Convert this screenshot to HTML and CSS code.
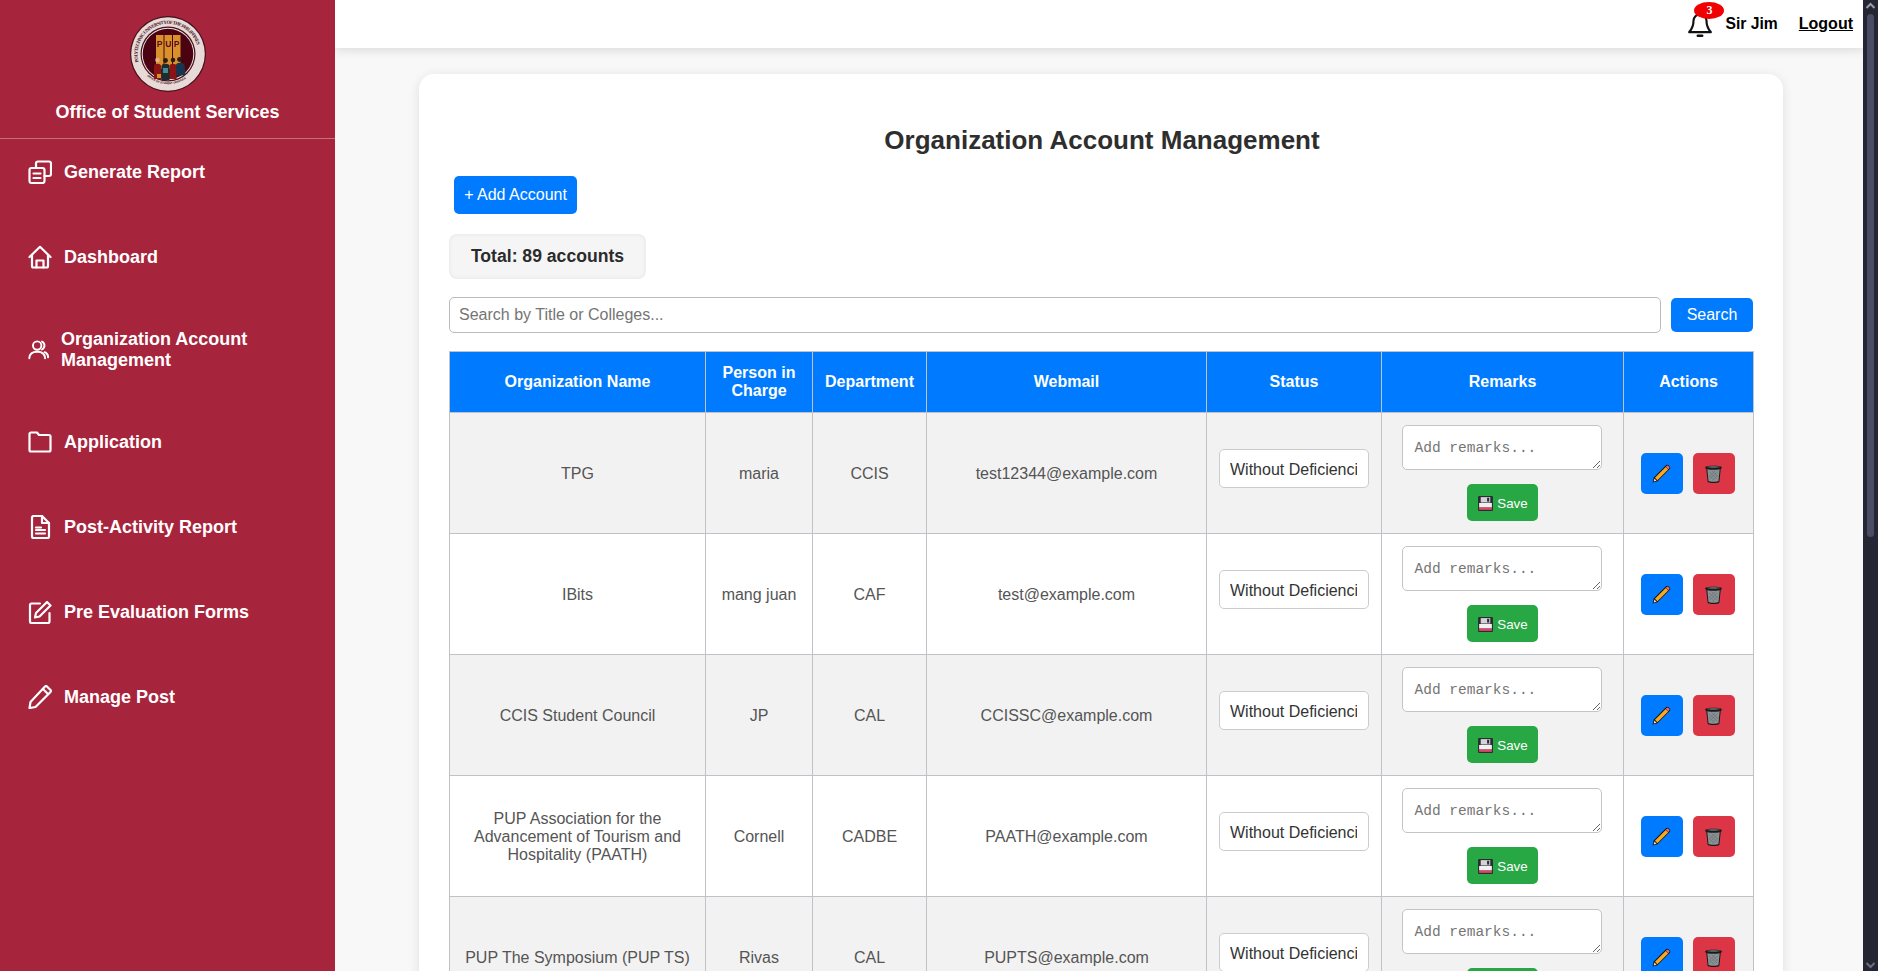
FILE: index.html
```html
<!DOCTYPE html>
<html lang="en">
<head>
<meta charset="utf-8">
<title>Organization Account Management</title>
<link rel="stylesheet" href="styles.css">
</head>
<body>
<svg class="defs" width="0" height="0" aria-hidden="true">
  <symbol id="e-pencil" viewBox="0 0 16 16">
    <path d="M1.200 14.800l.9-3.700L11.600 1.600a1.100 1.100 0 0 1 1.500 0l1.300 1.300a1.100 1.100 0 0 1 0 1.500L4.900 13.900z" fill="#111"/>
    <path d="M3 11.200l8.200-8.200 1.900 1.900-8.200 8.200z" fill="#f9a825"/>
    <path d="M11.300 2.800l.9-.8a.5.5 0 0 1 .7 0l1.100 1.100a.5.5 0 0 1 0 .7l-.8.9z" fill="#f06a80"/>
    <path d="M2.600 11.800l1.700 1.700-2.300.6z" fill="#f3d9b8"/>
  </symbol>
  <symbol id="e-trash" viewBox="0 0 16 16">
    <path d="M1.600 3.200C1.600 1.600 14.400 1.600 14.400 3.200c0 .7-.5 1.100-.9 1.300L12.500 14c-.1 1.600-8.900 1.600-9 0L2.500 4.500c-.4-.2-.9-.6-.9-1.300z" fill="#1a1a1a"/>
    <path d="M3.300 4.700c2.500.6 6.900.6 9.400 0L11.800 13.700c-1 .8-6.600 .8-7.600 0z" fill="#8a9296"/>
    <path d="M2.600 3.100c2.500-.8 8.300-.8 10.800 0-2.500.8-8.300.8-10.800 0z" fill="#6c7377"/>
    <path d="M4.500 6.500l6.500 6M6.500 5.800l5 4.500M4.800 9.500l3.800 3.800M11.300 6.500l-6.500 6M9.500 5.800l-5 4.500M11 9.500l-3.800 3.800" stroke="#6a7175" stroke-width=".5" fill="none"/>
  </symbol>
  <symbol id="e-disk" viewBox="0 0 16 16">
    <rect x="1" y="1" width="14" height="14" rx="1" fill="#2b2b33"/>
    <rect x="2" y="11.500" width="12" height="2.500" fill="#d9476a"/>
    <rect x="2" y="7.500" width="12" height="4" fill="#f1f1f1"/>
    <rect x="3.500" y="2" width="9" height="5" fill="#d4d4d8"/>
    <rect x="9.500" y="2.600" width="2" height="3.600" fill="#2b2b33"/>
  </symbol>
</svg>
<div class="app">
  <aside class="sidebar">
    <div class="brand">
      <svg class="logo" viewBox="0 0 76 76" role="img" aria-label="Office of Student Services seal">
        <defs>
          <path id="ring-top" d="M8.500 46A30.500 30.500 0 1 1 67.500 46"/>
          <path id="ring-bottom" d="M17 60A31 31 0 0 0 59 60"/>
        </defs>
        <circle cx="38" cy="38" r="38" fill="#43101d"/>
        <circle cx="38" cy="38" r="36.800" fill="#e8dad7"/>
        <text class="logo-ring"><textPath href="#ring-top" textLength="94">POLYTECHNIC UNIVERSITY OF THE PHILIPPINES</textPath></text>
        <text class="logo-ring-small"><textPath href="#ring-bottom" textLength="42">OFFICE OF STUDENT SERVICES</textPath></text>
        <circle cx="38" cy="38" r="27.500" fill="#43101d"/>
        <circle cx="38" cy="38" r="26.300" fill="#efe4e0"/>
        <circle cx="38" cy="38" r="25.300" fill="#4b0312"/>
        <rect x="26" y="19" width="7.500" height="34" fill="#d9922b"/>
        <rect x="34.500" y="19" width="7.500" height="34" fill="#d9922b"/>
        <rect x="43" y="19" width="7.500" height="34" fill="#d9922b"/>
        <text class="logo-pup" x="29.700" y="31">P</text>
        <text class="logo-pup" x="38.200" y="31">U</text>
        <text class="logo-pup" x="46.700" y="31">P</text>
        <circle cx="27.500" cy="44" r="2.300" fill="#e2b08c"/>
        <path d="M24 63V50c0-3 7-3 7 0l1 13z" fill="#8a1414"/>
        <circle cx="35.500" cy="44.500" r="2.400" fill="#2a1a1a"/>
        <path d="M31.500 64V50c0-3 8-3 8 0v14z" fill="#1d2b33"/>
        <rect x="33" y="52" width="5" height="5" fill="#3d8f8f"/>
        <circle cx="43" cy="44" r="2.300" fill="#2a1a1a"/>
        <path d="M39.500 63V50c0-3 7-3 7 0v13z" fill="#8a1414"/>
        <circle cx="49.500" cy="43.500" r="2.400" fill="#2a1a1a"/>
        <path d="M46 60V49c0-3 8-3 8.500 0l1 10z" fill="#17364d"/>
        <rect x="27" y="58" width="4" height="4" fill="#d9922b"/>
      </svg>
      <div class="brand-title">Office of Student Services</div>
    </div>
    <nav class="nav">
      <a class="nav-item">
        <svg class="nav-icon" viewBox="0 0 24 24"><rect x="1.500" y="8" width="15" height="15" rx="2"/><path d="M8 8V3.500a2 2 0 0 1 2-2h11a2 2 0 0 1 2 2V14a2 2 0 0 1-2 2h-4.500"/><path d="M5.500 13.500h7M5.500 18h7"/></svg>
        <span>Generate Report</span>
      </a>
      <a class="nav-item">
        <svg class="nav-icon" viewBox="0 0 24 24"><path d="M1.500 12L12 1.800 22.500 12"/><path d="M4 10v11a1.500 1.500 0 0 0 1.500 1.500h13A1.500 1.500 0 0 0 20 21V10"/><path d="M8.500 22.500V15.500h7v7"/></svg>
        <span>Dashboard</span>
      </a>
      <a class="nav-item">
        <svg class="nav-icon nav-icon-small" viewBox="0 0 24 24"><circle cx="10.500" cy="7.500" r="4.800"/><path d="M1.500 22c0-5 3.500-7.500 9-7.500s9 2.500 9 7.500"/><path d="M16 3a5 5 0 0 1 0 9"/><path d="M19 15c2.500 1 4 3 4 6"/></svg>
        <span>Organization Account Management</span>
      </a>
      <a class="nav-item">
        <svg class="nav-icon" viewBox="0 0 24 24"><path d="M1.500 4a1.500 1.500 0 0 1 1.500-1.500h6l2 2.500h10a1.500 1.500 0 0 1 1.500 1.500V20a1.500 1.500 0 0 1-1.500 1.500H3A1.500 1.500 0 0 1 1.500 20z"/></svg>
        <span>Application</span>
      </a>
      <a class="nav-item">
        <svg class="nav-icon" viewBox="0 0 24 24"><path d="M4 2.500a1.500 1.500 0 0 1 1.500-1.500H14l7 7v13.500a1.500 1.500 0 0 1-1.500 1.500h-14A1.500 1.500 0 0 1 4 21.500z"/><path d="M14 1v7h7"/><path d="M8 12.500h5M8 15h9M8 18.500h9"/></svg>
        <span>Post-Activity Report</span>
      </a>
      <a class="nav-item">
        <svg class="nav-icon" viewBox="0 0 24 24"><path d="M12 3.500H3.500a1.500 1.500 0 0 0-1.500 1.500v16.500A1.500 1.500 0 0 0 3.500 23H20a1.500 1.500 0 0 0 1.500-1.500V13"/><path d="M19 2l3.500 3.500L11.500 16.500 7 17.500l1-4.500z"/></svg>
        <span>Pre Evaluation Forms</span>
      </a>
      <a class="nav-item">
        <svg class="nav-icon" viewBox="0 0 24 24"><path d="M19 1.500l3.500 3.500a1.500 1.500 0 0 1 0 2L7.500 22 1.500 23l1-6L17 1.500a1.500 1.500 0 0 1 2 0z"/><path d="M15 4l5 5"/></svg>
        <span>Manage Post</span>
      </a>
    </nav>
  </aside>
  <div class="workspace">
    <header class="topbar">
      <div class="bell">
        <svg class="bell-icon" viewBox="0 0 24 24"><path d="M18 9a6 6 0 0 0-12 0c0 6-2 8-4 10.500h20C20 17 18 15 18 9z"/><path d="M10 22.800h4" stroke-width="2.400"/></svg>
        <span class="bell-badge">3</span>
      </div>
      <span class="user-name">Sir Jim</span>
      <a class="logout">Logout</a>
    </header>
    <main class="main">
      <section class="card">
        <h1 class="title">Organization Account Management</h1>
        <button class="btn btn-add">+ Add Account</button>
        <div class="total">Total: 89 accounts</div>
        <div class="search-row">
          <input class="search-input" type="text" placeholder="Search by Title or Colleges...">
          <button class="btn btn-search">Search</button>
        </div>
        <table class="accounts">
          <colgroup>
            <col class="c-org"><col class="c-person"><col class="c-dept"><col class="c-mail"><col class="c-status"><col class="c-remarks"><col class="c-actions">
          </colgroup>
          <thead>
            <tr><th>Organization Name</th><th>Person in Charge</th><th>Department</th><th>Webmail</th><th>Status</th><th>Remarks</th><th>Actions</th></tr>
          </thead>
          <tbody>
            <tr>
              <td>TPG</td><td>maria</td><td>CCIS</td><td>test12344@example.com</td>
              <td><select class="status"><option>Without Deficiencies</option></select></td>
              <td><div class="remarks"><textarea class="remark-box" placeholder="Add remarks..."></textarea><button class="btn-save"><svg class="emoji"><use href="#e-disk"/></svg>Save</button></div></td>
              <td><div class="actions"><button class="act act-edit"><svg class="emoji-lg"><use href="#e-pencil"/></svg></button><button class="act act-del"><svg class="emoji-lg"><use href="#e-trash"/></svg></button></div></td>
            </tr>
            <tr>
              <td>IBits</td><td>mang juan</td><td>CAF</td><td>test@example.com</td>
              <td><select class="status"><option>Without Deficiencies</option></select></td>
              <td><div class="remarks"><textarea class="remark-box" placeholder="Add remarks..."></textarea><button class="btn-save"><svg class="emoji"><use href="#e-disk"/></svg>Save</button></div></td>
              <td><div class="actions"><button class="act act-edit"><svg class="emoji-lg"><use href="#e-pencil"/></svg></button><button class="act act-del"><svg class="emoji-lg"><use href="#e-trash"/></svg></button></div></td>
            </tr>
            <tr>
              <td>CCIS Student Council</td><td>JP</td><td>CAL</td><td>CCISSC@example.com</td>
              <td><select class="status"><option>Without Deficiencies</option></select></td>
              <td><div class="remarks"><textarea class="remark-box" placeholder="Add remarks..."></textarea><button class="btn-save"><svg class="emoji"><use href="#e-disk"/></svg>Save</button></div></td>
              <td><div class="actions"><button class="act act-edit"><svg class="emoji-lg"><use href="#e-pencil"/></svg></button><button class="act act-del"><svg class="emoji-lg"><use href="#e-trash"/></svg></button></div></td>
            </tr>
            <tr>
              <td>PUP Association for the Advancement of Tourism and Hospitality (PAATH)</td><td>Cornell</td><td>CADBE</td><td>PAATH@example.com</td>
              <td><select class="status"><option>Without Deficiencies</option></select></td>
              <td><div class="remarks"><textarea class="remark-box" placeholder="Add remarks..."></textarea><button class="btn-save"><svg class="emoji"><use href="#e-disk"/></svg>Save</button></div></td>
              <td><div class="actions"><button class="act act-edit"><svg class="emoji-lg"><use href="#e-pencil"/></svg></button><button class="act act-del"><svg class="emoji-lg"><use href="#e-trash"/></svg></button></div></td>
            </tr>
            <tr>
              <td>PUP The Symposium (PUP TS)</td><td>Rivas</td><td>CAL</td><td>PUPTS@example.com</td>
              <td><select class="status"><option>Without Deficiencies</option></select></td>
              <td><div class="remarks"><textarea class="remark-box" placeholder="Add remarks..."></textarea><button class="btn-save"><svg class="emoji"><use href="#e-disk"/></svg>Save</button></div></td>
              <td><div class="actions"><button class="act act-edit"><svg class="emoji-lg"><use href="#e-pencil"/></svg></button><button class="act act-del"><svg class="emoji-lg"><use href="#e-trash"/></svg></button></div></td>
            </tr>
          </tbody>
        </table>
      </section>
    </main>
  </div>
  <div class="scrollbar">
    <svg class="scroll-arrow" viewBox="0 0 15 12"><path d="M3.500 8L7.500 4l4 4"/></svg>
    <div class="scroll-thumb"></div>
    <svg class="scroll-arrow scroll-arrow-down" viewBox="0 0 15 12"><path d="M3.500 4l4 4 4-4"/></svg>
  </div>
</div>
</body>
</html>
```
FILE: styles.css
```css
* { box-sizing: border-box; }
html, body { height: 100%; }
body {
  margin: 0;
  font-family: "Liberation Sans", Arial, sans-serif;
  background: #f8f8f8;
  color: #333;
  overflow: hidden;
}
.defs { position: absolute; }
.app { display: flex; height: 100vh; overflow: hidden; }

/* Sidebar */
.sidebar {
  flex: 0 0 335px;
  background: #a7243d;
  color: #fff;
  z-index: 3;
}
.brand {
  height: 139px;
  padding-top: 16px;
  border-bottom: 1px solid rgba(255, 255, 255, 0.35);
  display: flex;
  flex-direction: column;
  align-items: center;
}
.logo { width: 76px; height: 76px; display: block; }
.logo-ring { font: bold 4.800px "Liberation Serif", serif; fill: #43101d; }
.logo-ring-small { font: bold 2.800px "Liberation Sans", sans-serif; fill: #43101d; }
.logo-pup { font: bold 8.500px "Liberation Sans", sans-serif; fill: #5a0a18; text-anchor: middle; }
.brand-title { margin-top: 9px; font-size: 18px; line-height: 22px; font-weight: 700; }
.nav { display: flex; flex-direction: column; gap: 19px; }
.nav-item {
  display: flex;
  align-items: center;
  gap: 12px;
  min-height: 66px;
  padding: 19.500px 30px 19.500px 28px;
  font-size: 18px;
  line-height: 21px;
  font-weight: 700;
  color: #fff;
}
.nav-icon {
  flex: 0 0 24px;
  width: 24px;
  height: 24px;
  fill: none;
  stroke: #fff;
  stroke-width: 2.200;
  stroke-linecap: round;
  stroke-linejoin: round;
}
.nav-icon-small { flex-basis: 21px; width: 21px; height: 21px; }

/* Workspace */
.workspace { flex: 1; min-width: 0; display: flex; flex-direction: column; }
.topbar {
  flex: 0 0 48px;
  background: #fff;
  display: flex;
  align-items: center;
  justify-content: flex-end;
  padding-right: 10px;
  box-shadow: 0 2px 10px rgba(0, 0, 0, 0.13);
  z-index: 2;
  color: #000;
}
.bell { position: relative; width: 26px; height: 26px; margin-right: 12px; }
.bell-icon {
  width: 26px;
  height: 26px;
  display: block;
  fill: none;
  stroke: #111;
  stroke-width: 2;
  stroke-linejoin: round;
  stroke-linecap: round;
}
.bell-badge {
  position: absolute;
  left: 7px;
  top: -9px;
  width: 30px;
  height: 17px;
  border-radius: 50%;
  background: #f00000;
  color: #fff;
  font: bold 12px/17px "Liberation Serif", serif;
  text-align: center;
}
.user-name { font-size: 15.700px; font-weight: 700; margin-right: 21px; }
.logout { font-size: 16px; font-weight: 700; text-decoration: underline; }

.main { flex: 1; min-height: 0; overflow: hidden; padding: 26px 80px 0 84px; }
.card {
  background: #fff;
  border-radius: 15px;
  padding: 30px;
  box-shadow: 0 2px 12px rgba(0, 0, 0, 0.1);
}
.title {
  margin: 21px 0 21px;
  padding-left: 2px;
  font-size: 26px;
  line-height: 30px;
  font-weight: 700;
  text-align: center;
  color: #2e2e2e;
}
.btn {
  display: block;
  border: 0;
  border-radius: 5px;
  background: #007bff;
  color: #fff;
  font: 16px "Liberation Sans", sans-serif;
}
.btn-add { width: 123px; height: 38px; margin-left: 5px; padding: 0; }
.total {
  width: 197px;
  height: 45px;
  margin-top: 20px;
  border-radius: 8px;
  background: #f5f5f5;
  box-shadow: inset 0 0 4px rgba(0, 0, 0, 0.08);
  font-size: 17.600px;
  line-height: 45px;
  font-weight: 700;
  text-align: center;
  color: #2b2b2b;
}
.search-row { display: flex; align-items: center; gap: 10px; margin-top: 18px; }
.search-input {
  flex: 1;
  height: 36px;
  padding: 0 9px;
  border: 1px solid #bbb;
  border-radius: 5px;
  font: 16px "Liberation Sans", sans-serif;
  color: #333;
}
.search-input::placeholder { color: #757575; }
.btn-search { width: 82px; height: 34px; padding: 0; }

/* Table */
.accounts {
  width: 1304px;
  margin-top: 18px;
  border-collapse: collapse;
  table-layout: fixed;
}
.c-org { width: 256px; }
.c-person { width: 107px; }
.c-dept { width: 114px; }
.c-mail { width: 280px; }
.c-status { width: 175px; }
.c-remarks { width: 242px; }
.c-actions { width: 130px; }
.accounts th, .accounts td {
  border: 1px solid #bfc3c7;
  padding: 12px;
  text-align: center;
  vertical-align: middle;
  font-size: 16px;
}
.accounts th {
  height: 61px;
  padding: 10px 8px;
  background: #007bff;
  color: #fff;
  font-weight: 700;
  line-height: 18px;
}
.accounts td { color: #555; line-height: 18px; }
.accounts td:nth-child(-n+4) { padding-top: 13px; padding-bottom: 11px; }
.accounts tbody tr:nth-child(odd) td { background: #f2f2f2; }
.status {
  display: block;
  width: 150px;
  height: 39px;
  margin: 0 auto 9px;
  padding: 2px 11px 0 10px;
  appearance: none;
  -webkit-appearance: none;
  background: #fff;
  border: 1px solid #ccc;
  border-radius: 5px;
  font: 16px "Liberation Sans", sans-serif;
  color: #333;
}
.remarks { display: flex; flex-direction: column; align-items: center; gap: 14px; }
.remark-box {
  display: block;
  width: 200px;
  height: 45px;
  margin-right: 2px;
  padding: 13px 11px 10px 12px;
  border: 1px solid #c4c4c4;
  border-radius: 5px;
  font: 14.500px/18px "Liberation Mono", monospace;
  resize: vertical;
}
.remark-box::placeholder { color: #757575; }
.btn-save {
  display: flex;
  align-items: center;
  justify-content: center;
  gap: 3px;
  width: 71px;
  height: 37px;
  padding: 1px 0 0;
  border: 0;
  border-radius: 5px;
  background: #28a745;
  color: #fff;
  font: 13.330px "Liberation Sans", sans-serif;
}
.emoji { width: 17px; height: 17px; }
.actions { display: flex; justify-content: center; gap: 10px; padding-right: 2px; }
.act {
  display: flex;
  align-items: center;
  justify-content: center;
  width: 42px;
  height: 41px;
  padding: 0;
  border: 0;
  border-radius: 5px;
}
.act-edit { background: #007bff; }
.act-del { background: #dc3545; }
.emoji-lg { width: 21px; height: 21px; }

/* Scrollbar column */
.scrollbar {
  position: relative;
  flex: 0 0 15px;
  background: #242633;
  z-index: 4;
}
.scroll-arrow {
  display: block;
  width: 15px;
  height: 12px;
  fill: none;
  stroke: #9a9ca8;
  stroke-width: 2;
}
.scroll-arrow-down { position: absolute; bottom: 0; left: 0; stroke: #6d6f7c; }
.scroll-thumb {
  width: 7px;
  height: 523px;
  margin: 2px 0 0 4px;
  border-radius: 4px;
  background: #4a4c63;
}
```
